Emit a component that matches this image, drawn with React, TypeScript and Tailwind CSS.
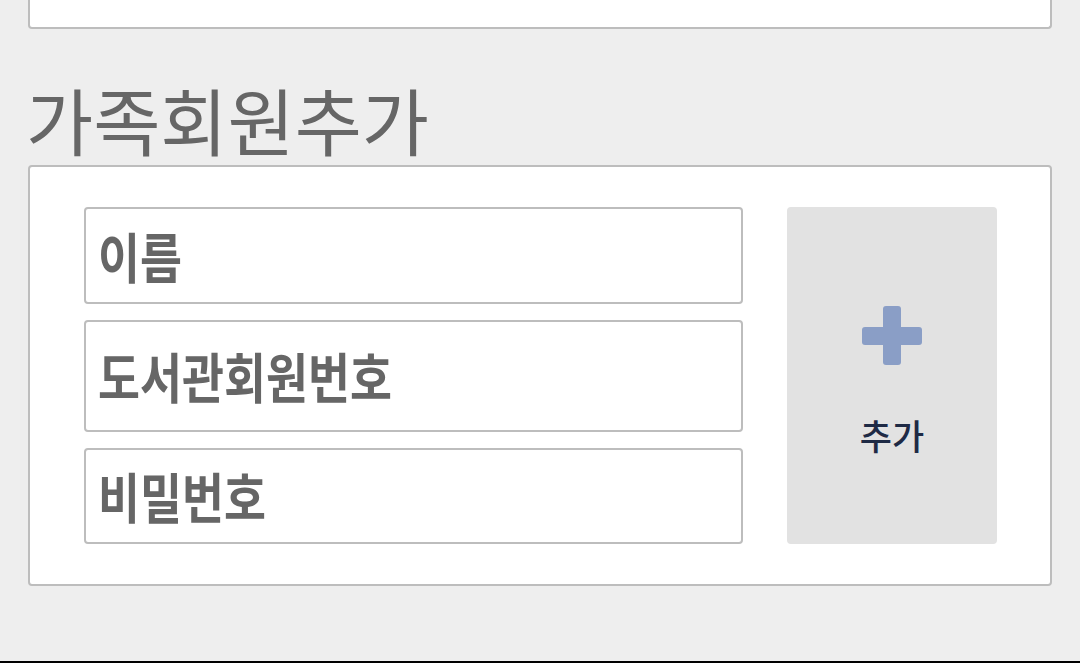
import React from 'react';

const fields = [
  { label: '이름', height: 'h-[97px]' },
  { label: '도서관회원번호', height: 'h-[112px]' },
  { label: '비밀번호', height: 'h-[96px]' },
];

const PlusIcon = () => (
  <svg width="60" height="59" viewBox="0 0 60 59" className="block">
    <rect x="21" y="0" width="18" height="59" rx="3" fill="#8a9ec6" />
    <rect x="0" y="21" width="60" height="18" rx="3" fill="#8a9ec6" />
  </svg>
);

const App = () => {
  return (
    <div
      className="h-[663px] w-[1080px] bg-[#eeeeee] flex flex-col overflow-hidden"
      style={{ fontFamily: '"Noto Sans CJK KR", "Noto Sans", sans-serif' }}
    >
      <div className="mx-[28px] h-[29px] bg-white border-x-2 border-b-2 border-[#bdbdbd] rounded-b-[4px]" />

      <h2 className="ml-[26px] mt-[53px] h-[83px] text-[73px] leading-none font-normal text-[#666666] whitespace-nowrap">
        가족회원추가
      </h2>

      <div className="mx-[28px] bg-white border-2 border-[#bdbdbd] rounded-[4px] pt-[40px] pb-[40px] pl-[54px] pr-[53px] flex">
        <div className="flex-1 flex flex-col gap-[16px]">
          {fields.map((f) => (
            <div
              key={f.label}
              className={`${f.height} border-2 border-[#bdbdbd] rounded-[4px] flex items-center pl-[12px]`}
            >
              <span className="text-[54px] font-bold leading-none text-[#666666] whitespace-nowrap origin-left scale-x-[0.845]">
                {f.label}
              </span>
            </div>
          ))}
        </div>
        <button className="ml-[44px] w-[210px] bg-[#e2e2e2] rounded-[4px] flex flex-col items-center justify-center gap-[52px] pt-[6px]">
          <PlusIcon />
          <span className="text-[35px] leading-none font-medium text-[#1e2a45]">추가</span>
        </button>
      </div>

      <div className="mt-auto h-[2px] bg-black" />
    </div>
  );
};

export default App;
